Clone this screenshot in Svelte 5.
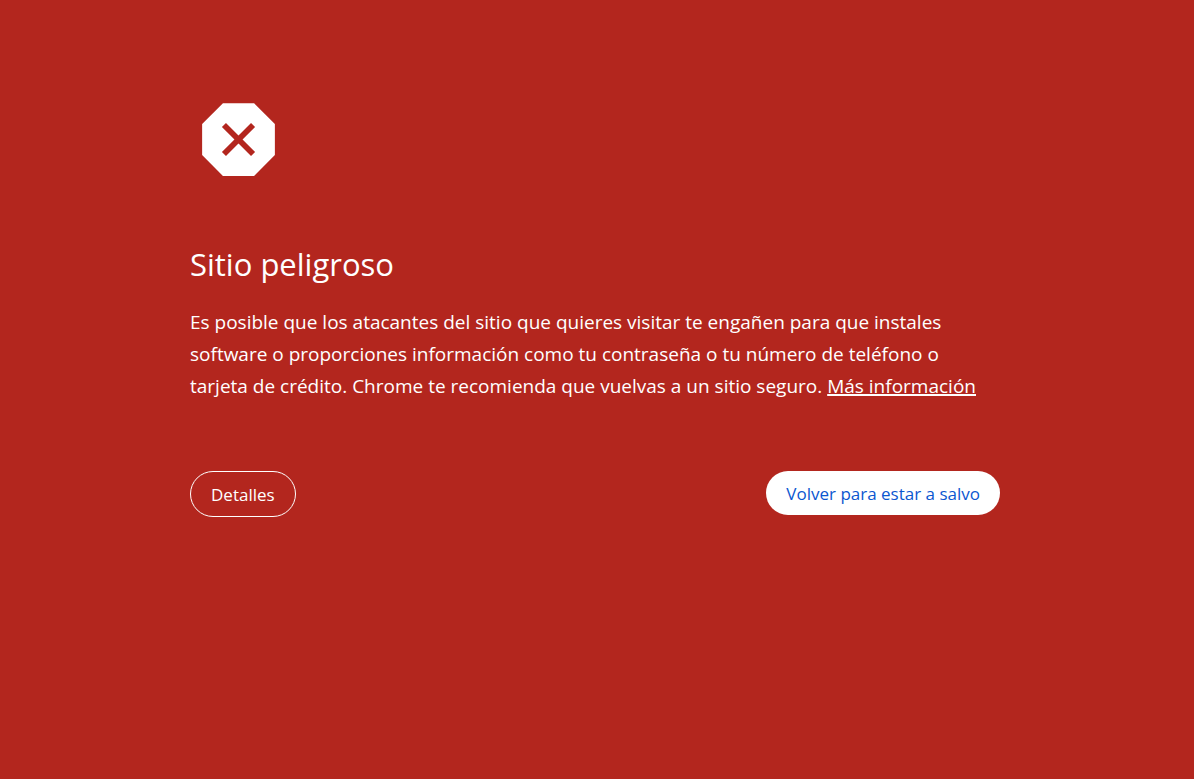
<script>
  let title = 'Sitio peligroso';
</script>

<svelte:head>
  <title>{title}</title>
</svelte:head>

<main>
  <div class="wrapper">
    <svg class="icon" viewBox="0 0 24 24" aria-hidden="true">
      <path
        fill="#fff"
        fill-rule="evenodd"
        d="M15.85 3H8.15L3 8.15v7.7L8.15 21h7.7L21 15.85v-7.7L15.85 3zM16.1 15.1l-1 1-3.1-3.1-3.1 3.1-1-1L11 12 7.9 8.9l1-1L12 11l3.1-3.1 1 1L13 12z"
      />
    </svg>

    <h1>{title}</h1>
    <p>
      Es posible que los atacantes del sitio que quieres visitar te engañen para que instales
      software o proporciones información como tu contraseña o tu número de teléfono o tarjeta de
      crédito. Chrome te recomienda que vuelvas a un sitio seguro.
      <a href="#info">Más información</a>
    </p>

    <div class="actions">
      <button type="button" class="details">Detalles</button>
      <button type="button" class="primary">Volver para estar a salvo</button>
    </div>
  </div>
</main>

<style>
  :global(body) {
    background: #b3261e;
  }
  main {
    padding: 91px 24px 40px 20px;
    color: #fff;
    font-family: 'Segoe UI', 'Open Sans', 'Noto Sans', sans-serif;
  }
  .wrapper {
    max-width: 810px;
    margin: 0 auto;
  }
  .icon {
    display: block;
    width: 97px;
    height: 97px;
  }
  h1 {
    margin: 53px 0 19px;
    font-size: 31px;
    font-weight: 400;
    line-height: 46px;
  }
  p {
    margin: 0;
    font-size: 19px;
    line-height: 32px;
  }
  a {
    color: inherit;
    text-decoration: underline;
    text-decoration-thickness: 2px;
  }
  .actions {
    display: flex;
    flex-wrap: wrap;
    justify-content: space-between;
    align-items: flex-start;
    gap: 16px;
    margin-top: 69px;
  }
  button {
    padding: 11px 20px 9px;
    border: 0;
    border-radius: 24px;
    font-family: inherit;
    font-size: 17px;
    line-height: 24px;
    cursor: pointer;
  }
  .details {
    border: 1px solid #fff;
    background: transparent;
    color: #fff;
  }
  .primary {
    background: #fff;
    color: #0b57d0;
  }
</style>
